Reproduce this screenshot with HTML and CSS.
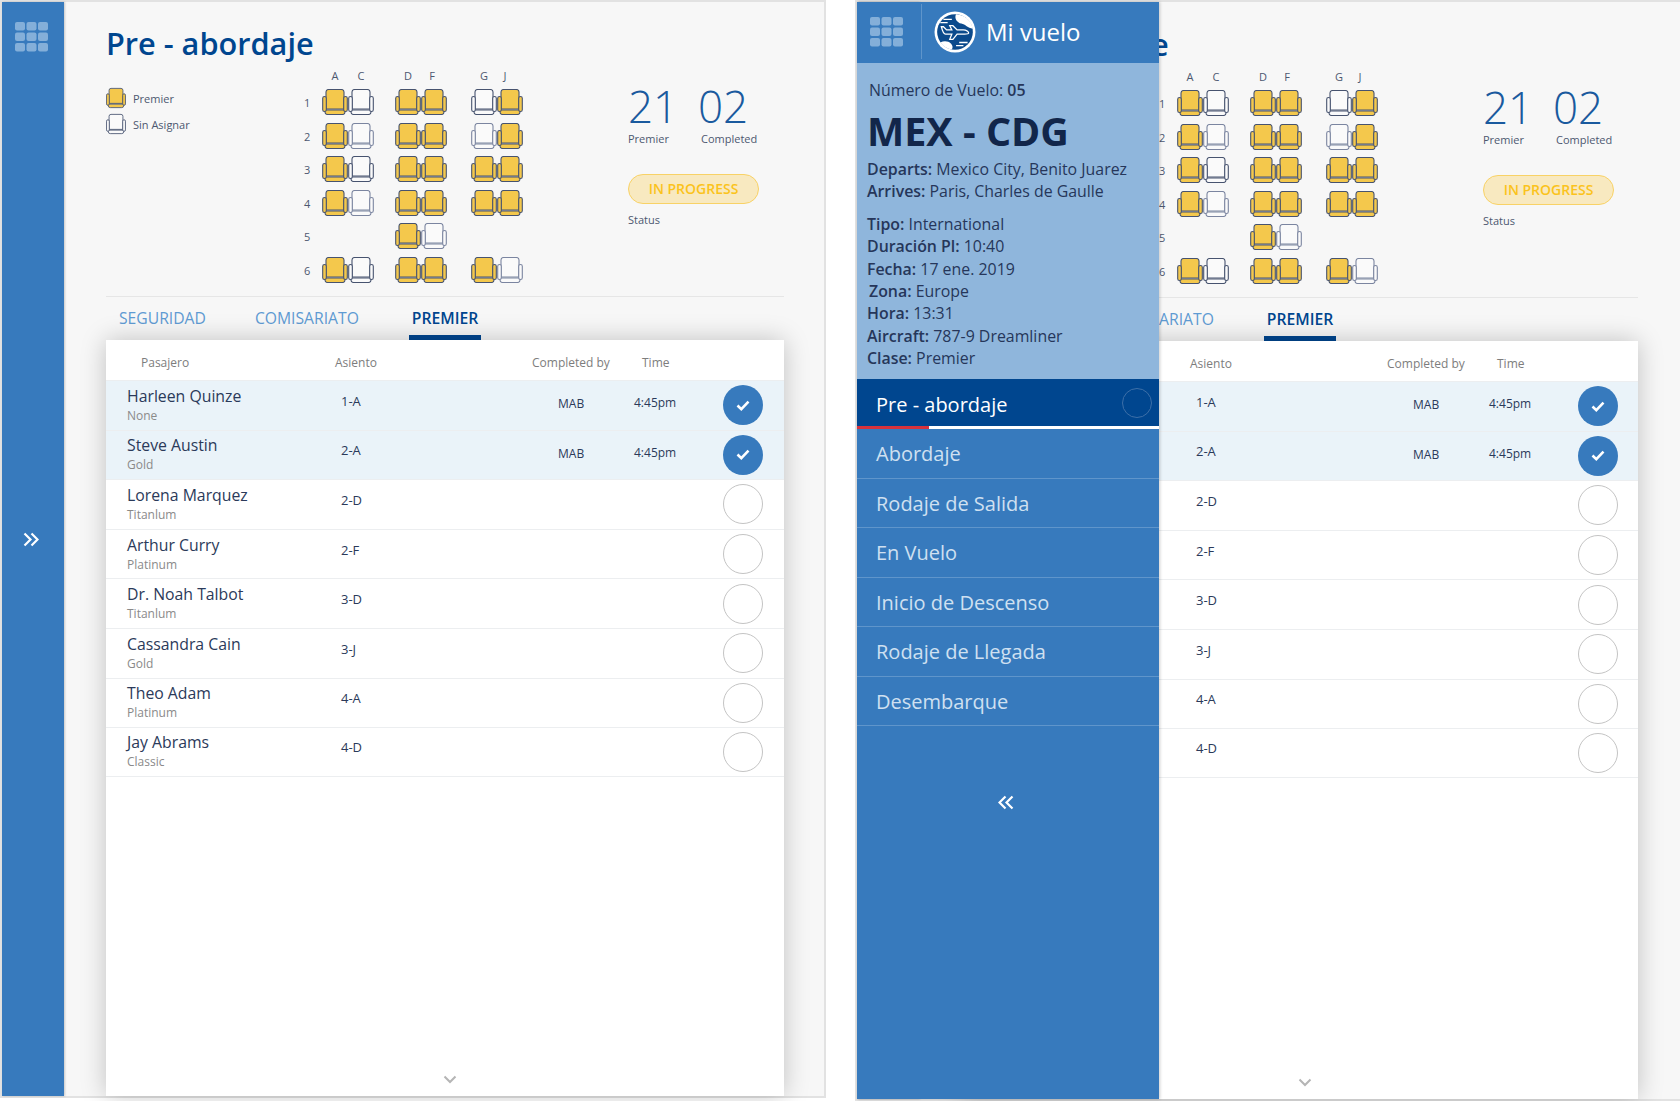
FILE: index.html
```html
<!DOCTYPE html>
<html lang="es">
<head>
  <meta charset="UTF-8">
  <title>Pre - abordaje</title>
  <link rel="stylesheet" href="styles.css">
</head>
<body>
  <!-- iconos compartidos -->
  <svg class="defs" width="0" height="0">
    <symbol id="seat" viewBox="0 0 26 26">
      <path d="M4 20V3a2.500 2.500 0 0 1 2.500-2.500h13A2.500 2.500 0 0 1 22 3v17z"/>
      <path d="M3 21h20v2a2.500 2.500 0 0 1-2.500 2.500h-15A2.500 2.500 0 0 1 3 23z"/>
      <rect x="0.700" y="7.500" width="3.600" height="15" rx="1.800"/>
      <rect x="21.700" y="7.500" width="3.600" height="15" rx="1.800"/>
    </symbol>
    <symbol id="grid" viewBox="0 0 33 30">
      <rect x="0" y="0" width="10" height="8.500" rx="2"/><rect x="11.500" y="0" width="10" height="8.500" rx="2"/><rect x="23" y="0" width="10" height="8.500" rx="2"/>
      <rect x="0" y="10.500" width="10" height="8.500" rx="2"/><rect x="11.500" y="10.500" width="10" height="8.500" rx="2"/><rect x="23" y="10.500" width="10" height="8.500" rx="2"/>
      <rect x="0" y="21" width="10" height="8.500" rx="2"/><rect x="11.500" y="21" width="10" height="8.500" rx="2"/><rect x="23" y="21" width="10" height="8.500" rx="2"/>
    </symbol>
    <symbol id="check" viewBox="0 0 14 11">
      <path d="M1.500 5.500l3.800 3.600 7.200-7.400" fill="none" stroke="#fff" stroke-width="2.600"/>
    </symbol>
    <symbol id="chevrons" viewBox="0 0 16 15">
      <path d="M1.500 1.500l6 6-6 6M8.500 1.500l6 6-6 6" fill="none" stroke="#fff" stroke-width="2.200"/>
    </symbol>
  </svg>

  <!-- pantalla 1 : menu cerrado -->
  <section class="screen">
    <aside class="rail">
      <svg class="grid-icon"><use href="#grid"/></svg>
      <svg class="rail-arrow"><use href="#chevrons"/></svg>
    </aside>
    <div class="main">
      <h1 class="title">Pre - abordaje</h1>
      <div class="summary">
        <div class="legend">
          <div class="legend-item"><svg class="seat on"><use href="#seat"/></svg>Premier</div>
          <div class="legend-item"><svg class="seat"><use href="#seat"/></svg>Sin Asignar</div>
        </div>
        <div class="seatmap">
          <span></span><b>A</b><b>C</b><span></span><b>D</b><b class="col-f">F</b><span></span><b>G</b><b class="col-j">J</b>
          <i>1</i><svg class="seat on"><use href="#seat"/></svg><svg class="seat"><use href="#seat"/></svg><span></span><svg class="seat on"><use href="#seat"/></svg><svg class="seat on"><use href="#seat"/></svg><span></span><svg class="seat"><use href="#seat"/></svg><svg class="seat on"><use href="#seat"/></svg>
          <i>2</i><svg class="seat on"><use href="#seat"/></svg><svg class="seat soft"><use href="#seat"/></svg><span></span><svg class="seat on"><use href="#seat"/></svg><svg class="seat on"><use href="#seat"/></svg><span></span><svg class="seat soft"><use href="#seat"/></svg><svg class="seat on"><use href="#seat"/></svg>
          <i>3</i><svg class="seat on"><use href="#seat"/></svg><svg class="seat"><use href="#seat"/></svg><span></span><svg class="seat on"><use href="#seat"/></svg><svg class="seat on"><use href="#seat"/></svg><span></span><svg class="seat on"><use href="#seat"/></svg><svg class="seat on"><use href="#seat"/></svg>
          <i>4</i><svg class="seat on"><use href="#seat"/></svg><svg class="seat soft"><use href="#seat"/></svg><span></span><svg class="seat on"><use href="#seat"/></svg><svg class="seat on"><use href="#seat"/></svg><span></span><svg class="seat on"><use href="#seat"/></svg><svg class="seat on"><use href="#seat"/></svg>
          <i>5</i><span></span><span></span><span></span><svg class="seat on"><use href="#seat"/></svg><svg class="seat soft"><use href="#seat"/></svg><span></span><span></span><span></span>
          <i>6</i><svg class="seat on"><use href="#seat"/></svg><svg class="seat"><use href="#seat"/></svg><span></span><svg class="seat on"><use href="#seat"/></svg><svg class="seat on"><use href="#seat"/></svg><span></span><svg class="seat on"><use href="#seat"/></svg><svg class="seat soft"><use href="#seat"/></svg>
        </div>
        <div class="stats">
          <div class="counts">
            <div class="count"><strong>21</strong><span>Premier</span></div>
            <div class="count"><strong>02</strong><span>Completed</span></div>
          </div>
          <div class="pill">IN PROGRESS</div>
          <div class="status-label">Status</div>
        </div>
      </div>
      <nav class="tabs">
        <a class="tab tab-seguridad">SEGURIDAD</a>
        <a class="tab tab-comisariato">COMISARIATO</a>
        <a class="tab active">PREMIER</a>
      </nav>
      <div class="card">
        <div class="list-head"><span>Pasajero</span><span>Asiento</span><span>Completed by</span><span>Time</span></div>
        <div class="row done"><div class="who"><div class="name">Harleen Quinze</div><div class="tier">None</div></div><div class="place">1-A</div><div class="by">MAB</div><div class="time">4:45pm</div><div class="tick"><svg><use href="#check"/></svg></div></div>
        <div class="row done"><div class="who"><div class="name">Steve Austin</div><div class="tier">Gold</div></div><div class="place">2-A</div><div class="by">MAB</div><div class="time">4:45pm</div><div class="tick"><svg><use href="#check"/></svg></div></div>
        <div class="row"><div class="who"><div class="name">Lorena Marquez</div><div class="tier">Titanlum</div></div><div class="place">2-D</div><div class="by"></div><div class="time"></div><div class="tick"></div></div>
        <div class="row"><div class="who"><div class="name">Arthur Curry</div><div class="tier">Platinum</div></div><div class="place">2-F</div><div class="by"></div><div class="time"></div><div class="tick"></div></div>
        <div class="row"><div class="who"><div class="name">Dr. Noah Talbot</div><div class="tier">Titanlum</div></div><div class="place">3-D</div><div class="by"></div><div class="time"></div><div class="tick"></div></div>
        <div class="row"><div class="who"><div class="name">Cassandra Cain</div><div class="tier">Gold</div></div><div class="place">3-J</div><div class="by"></div><div class="time"></div><div class="tick"></div></div>
        <div class="row"><div class="who"><div class="name">Theo Adam</div><div class="tier">Platinum</div></div><div class="place">4-A</div><div class="by"></div><div class="time"></div><div class="tick"></div></div>
        <div class="row"><div class="who"><div class="name">Jay Abrams</div><div class="tier">Classic</div></div><div class="place">4-D</div><div class="by"></div><div class="time"></div><div class="tick"></div></div>
        <svg class="more" viewBox="0 0 14 9"><path d="M1.500 1.500L7 7l5.500-5.500" fill="none" stroke="#b5b5b5" stroke-width="2"/></svg>
      </div>
    </div>
  </section>

  <!-- pantalla 2 : menu abierto -->
  <section class="screen screen-open">
    <aside class="rail"></aside>
    <div class="main">
      <h1 class="title">Pre - abordaje</h1>
      <div class="summary">
        <div class="legend"></div>
        <div class="seatmap">
          <span></span><b>A</b><b>C</b><span></span><b>D</b><b class="col-f">F</b><span></span><b>G</b><b class="col-j">J</b>
          <i>1</i><svg class="seat on"><use href="#seat"/></svg><svg class="seat"><use href="#seat"/></svg><span></span><svg class="seat on"><use href="#seat"/></svg><svg class="seat on"><use href="#seat"/></svg><span></span><svg class="seat"><use href="#seat"/></svg><svg class="seat on"><use href="#seat"/></svg>
          <i>2</i><svg class="seat on"><use href="#seat"/></svg><svg class="seat soft"><use href="#seat"/></svg><span></span><svg class="seat on"><use href="#seat"/></svg><svg class="seat on"><use href="#seat"/></svg><span></span><svg class="seat soft"><use href="#seat"/></svg><svg class="seat on"><use href="#seat"/></svg>
          <i>3</i><svg class="seat on"><use href="#seat"/></svg><svg class="seat"><use href="#seat"/></svg><span></span><svg class="seat on"><use href="#seat"/></svg><svg class="seat on"><use href="#seat"/></svg><span></span><svg class="seat on"><use href="#seat"/></svg><svg class="seat on"><use href="#seat"/></svg>
          <i>4</i><svg class="seat on"><use href="#seat"/></svg><svg class="seat soft"><use href="#seat"/></svg><span></span><svg class="seat on"><use href="#seat"/></svg><svg class="seat on"><use href="#seat"/></svg><span></span><svg class="seat on"><use href="#seat"/></svg><svg class="seat on"><use href="#seat"/></svg>
          <i>5</i><span></span><span></span><span></span><svg class="seat on"><use href="#seat"/></svg><svg class="seat soft"><use href="#seat"/></svg><span></span><span></span><span></span>
          <i>6</i><svg class="seat on"><use href="#seat"/></svg><svg class="seat"><use href="#seat"/></svg><span></span><svg class="seat on"><use href="#seat"/></svg><svg class="seat on"><use href="#seat"/></svg><span></span><svg class="seat on"><use href="#seat"/></svg><svg class="seat soft"><use href="#seat"/></svg>
        </div>
        <div class="stats">
          <div class="counts">
            <div class="count"><strong>21</strong><span>Premier</span></div>
            <div class="count"><strong>02</strong><span>Completed</span></div>
          </div>
          <div class="pill">IN PROGRESS</div>
          <div class="status-label">Status</div>
        </div>
      </div>
      <nav class="tabs">
        <a class="tab tab-seguridad">SEGURIDAD</a>
        <a class="tab tab-comisariato">COMISARIATO</a>
        <a class="tab active">PREMIER</a>
      </nav>
      <div class="card">
        <div class="list-head"><span>Pasajero</span><span>Asiento</span><span>Completed by</span><span>Time</span></div>
        <div class="row done"><div class="who"></div><div class="place">1-A</div><div class="by">MAB</div><div class="time">4:45pm</div><div class="tick"><svg><use href="#check"/></svg></div></div>
        <div class="row done"><div class="who"></div><div class="place">2-A</div><div class="by">MAB</div><div class="time">4:45pm</div><div class="tick"><svg><use href="#check"/></svg></div></div>
        <div class="row"><div class="who"></div><div class="place">2-D</div><div class="by"></div><div class="time"></div><div class="tick"></div></div>
        <div class="row"><div class="who"></div><div class="place">2-F</div><div class="by"></div><div class="time"></div><div class="tick"></div></div>
        <div class="row"><div class="who"></div><div class="place">3-D</div><div class="by"></div><div class="time"></div><div class="tick"></div></div>
        <div class="row"><div class="who"></div><div class="place">3-J</div><div class="by"></div><div class="time"></div><div class="tick"></div></div>
        <div class="row"><div class="who"></div><div class="place">4-A</div><div class="by"></div><div class="time"></div><div class="tick"></div></div>
        <div class="row"><div class="who"></div><div class="place">4-D</div><div class="by"></div><div class="time"></div><div class="tick"></div></div>
        <svg class="more" viewBox="0 0 14 9"><path d="M1.500 1.500L7 7l5.500-5.500" fill="none" stroke="#b5b5b5" stroke-width="2"/></svg>
      </div>
    </div>

    <!-- menu lateral por encima del contenido -->
    <aside class="drawer">
      <header class="drawer-head">
        <div class="drawer-grid"><svg class="grid-icon"><use href="#grid"/></svg></div>
        <svg class="logo" viewBox="0 0 40 40">
          <circle cx="20" cy="20" r="19.500" fill="#fff"/>
          <circle cx="20" cy="20" r="17" fill="#0b4a8c"/>
          <path d="M21 3a17 17 0 0 1 16 14c-5-1-7-4-11-5s-7-5-5-9z" fill="#fff"/>
          <path d="M6 30c4-2 8-1 10 1s2 4 1 5.700A17 17 0 0 1 6 30z" fill="#fff"/>
          <path d="M7 15h2l3 3h5l-2-4h3l4 4h6c3 0 5 2 5 3s-2 1-4 1h-7l-4 5h-3l2-5h-6c-2 0-3-3-4-7z" fill="#0b4a8c" stroke="#fff" stroke-width="1.200"/>
          <path d="M9 8h8M6 11h7M24 30h8M21 33h7" stroke="#fff" stroke-width="1.200"/>
        </svg>
        <span class="drawer-title">Mi vuelo</span>
      </header>
      <div class="flight">
        <div class="flight-no">Número de Vuelo: <b>05</b></div>
        <div class="route">MEX - CDG</div>
        <div class="line"><b>Departs:</b> Mexico City, Benito Juarez</div>
        <div class="line"><b>Arrives:</b> Paris, Charles de Gaulle</div>
        <div class="details">
          <div class="line"><b>Tipo:</b> International</div>
          <div class="line"><b>Duración Pl:</b> 10:40</div>
          <div class="line"><b>Fecha:</b> 17 ene. 2019</div>
          <div class="line zona"><b>Zona:</b> Europe</div>
          <div class="line"><b>Hora:</b> 13:31</div>
          <div class="line"><b>Aircraft:</b> 787-9 Dreamliner</div>
          <div class="line"><b>Clase:</b> Premier</div>
        </div>
      </div>
      <ul class="steps">
        <li class="step current">Pre - abordaje<span class="step-dot"></span></li>
        <li class="step">Abordaje</li>
        <li class="step">Rodaje de Salida</li>
        <li class="step">En Vuelo</li>
        <li class="step">Inicio de Descenso</li>
        <li class="step">Rodaje de Llegada</li>
        <li class="step">Desembarque</li>
      </ul>
      <svg class="drawer-arrow"><use href="#chevrons"/></svg>
    </aside>
  </section>
</body>
</html>
```

FILE: styles.css
```css
* {
  box-sizing: border-box;
}

html, body {
  margin: 0;
  height: 1101px;
  overflow: hidden;
}

body {
  display: flex;
  align-items: flex-start;
  gap: 29px;
  background-color: #fff;
  color: #2b3a5a;
  font-family: "Open Sans", "Liberation Sans", sans-serif;
}

.defs {
  position: absolute;
}

/* pantallas */
.screen {
  position: relative;
  display: flex;
  flex: none;
  width: 826px;
  height: 1098px;
  border: 2px solid #e2e2e2;
  background-color: #f7f7f7;
}

.screen-open {
  width: 825px;
  height: 1101px;
  border-right: none;
}

.screen-open .main {
  padding: 20px 42px 0 42px;
}

.rail {
  display: flex;
  flex: none;
  flex-direction: column;
  align-items: center;
  width: 62px;
  padding: 20px 4px 0 0;
  background-color: #377abd;
  box-shadow: 1px 0 2px rgba(0, 0, 0, 0.2);
}

.grid-icon {
  width: 33px;
  height: 30px;
  fill: #84afd9;
}

.rail-arrow {
  width: 16px;
  height: 15px;
  margin-top: 480px;
}

.main {
  display: flex;
  flex: 1;
  flex-direction: column;
  min-width: 0;
  padding: 19px 40px 0 42px;
}

.title {
  margin: 0;
  font-size: 30.700px;
  font-weight: 600;
  line-height: 44px;
  color: #00468f;
}

/* resumen */
.summary {
  display: flex;
  height: 228px;
  margin-top: 4px;
  border-bottom: 1px solid #e6e6e6;
}

.legend {
  flex: none;
  width: 192px;
  padding-top: 16px;
}

.legend-item {
  display: flex;
  align-items: center;
  gap: 7px;
  height: 26px;
  font-size: 11px;
  color: #4d5870;
}

.legend-item .seat {
  width: 20px;
  height: 22px;
}

.seat {
  width: 26px;
  height: 26px;
  fill: #fafafa;
  stroke: #47536f;
  stroke-width: 1.100;
}

.seat.on {
  fill: #f4c84c;
}

.seat.soft {
  stroke: #7b85a0;
}

.seatmap {
  display: grid;
  flex: none;
  grid-template-columns: 24px 26px 26px 21px 26px 26px 24px 26px 26px;
  grid-template-rows: 20px repeat(6, 33.500px);
  align-items: start;
  font-size: 11px;
  color: #4d5870;
}

.seatmap b {
  margin-top: -1px;
  font-weight: 400;
  text-align: center;
}

.seatmap .col-f {
  padding-right: 4px;
}

.seatmap .col-j {
  padding-right: 10px;
}

.seatmap i {
  padding: 6px 0 0 6px;
  font-style: normal;
}

.stats {
  margin-left: 105px;
  padding-top: 12px;
}

.counts {
  display: flex;
}

.count {
  display: flex;
  flex-direction: column;
  width: 70px;
}

.count strong {
  font-size: 44px;
  font-weight: 300;
  line-height: 50px;
  color: #1a5a9e;
}

.count span {
  margin-top: 1px;
  font-size: 11px;
  line-height: 14px;
  color: #4d5870;
}

.count + .count span {
  margin-left: 3px;
}

.pill {
  width: 131px;
  height: 30px;
  margin-top: 28px;
  border: 1px solid #f8d266;
  border-radius: 15px;
  background-color: #f8e9c0;
  color: #fbc31c;
  font-size: 14px;
  font-weight: 600;
  line-height: 28px;
  text-align: center;
}

.status-label {
  margin-top: 9px;
  font-size: 11px;
  line-height: 14px;
  color: #4d5870;
}

/* onglets */
.tabs {
  display: flex;
  height: 43px;
  font-size: 15.700px;
  line-height: 43px;
}

.tab {
  color: #5f9bd3;
}

.tab-seguridad {
  margin-left: 13px;
}

.tab-comisariato {
  margin-left: 49px;
}

.tab.active {
  margin-left: 50px;
  padding: 0 3px;
  border-bottom: 5px solid #00468f;
  color: #00468f;
  font-weight: 600;
}

/* liste */
.card {
  position: relative;
  flex: 1;
  background-color: #fff;
  box-shadow: 0 0 24px rgba(0, 0, 0, 0.22);
}

.list-head {
  display: grid;
  grid-template-columns: 194px 197px 110px auto;
  height: 40px;
  padding-left: 35px;
  font-size: 12px;
  line-height: 46px;
  color: #7d7d7d;
}

.row {
  display: grid;
  grid-template-columns: 214px 217px 76px 89px 40px;
  align-items: center;
  height: 49.600px;
  padding-left: 21px;
  border-top: 1px solid #eceef0;
  font-size: 12px;
}

.row:nth-of-type(9) {
  border-bottom: 1px solid #eceef0;
}

.row.done {
  background-color: #eaf3f9;
}

.who {
  margin-top: -1px;
}

.name {
  font-size: 15.800px;
  line-height: 22px;
}

.tier {
  font-size: 12px;
  line-height: 18px;
  color: #8a8a8a;
}

.place {
  margin-bottom: 9px;
  font-size: 13px;
}

.by {
  margin-bottom: 3px;
}

.time {
  margin-bottom: 5px;
}

.tick {
  width: 40px;
  height: 40px;
  border: 1px solid #c4c4c4;
  border-radius: 50%;
  background-color: #fff;
}

.row.done .tick {
  display: flex;
  align-items: center;
  justify-content: center;
  border: none;
  background-color: #377abd;
}

.tick svg {
  width: 14px;
  height: 11px;
}

.more {
  position: absolute;
  left: 337px;
  bottom: 12px;
  width: 14px;
  height: 9px;
}

/* menu lateral */
.drawer {
  position: absolute;
  top: 0;
  left: 0;
  bottom: 0;
  width: 302px;
  background-color: #377abd;
  box-shadow: 1px 0 3px rgba(0, 0, 0, 0.2);
}

.drawer-head {
  display: flex;
  align-items: center;
  height: 61px;
  padding-bottom: 2px;
}

.drawer-grid {
  display: flex;
  align-items: center;
  justify-content: center;
  width: 65px;
  height: 55px;
  padding-right: 6px;
  border-right: 1px solid #5f95cb;
}

.logo {
  width: 42px;
  height: 42px;
  margin-left: 12px;
}

.drawer-title {
  margin-left: 10px;
  font-size: 24px;
  color: #fff;
}

.flight {
  height: 316px;
  padding: 15px 12px 0;
  background-color: #8fb6dc;
  font-size: 15.900px;
  line-height: 22.400px;
  color: #26365a;
}

.flight-no {
  line-height: 24px;
}

.flight b {
  font-weight: 600;
}

.route {
  margin: 4px 0 2px -2px;
  font-size: 39.500px;
  font-weight: 700;
  line-height: 50px;
  color: #12264a;
}

.line {
  margin-left: -2px;
}

.details {
  margin-top: 10px;
}

.zona {
  margin-left: 0;
}

.steps {
  margin: 0;
  padding: 0;
  list-style: none;
}

.step {
  position: relative;
  height: 49.500px;
  padding-left: 19px;
  border-bottom: 1px solid #5f95cb;
  color: #cfe0f1;
  font-size: 20px;
  line-height: 49px;
}

.step.current {
  height: 50px;
  border-bottom: 3px solid #fff;
  background-color: #00468f;
  color: #fff;
  line-height: 51px;
}

.step.current::after {
  content: "";
  position: absolute;
  left: 0;
  bottom: -3px;
  width: 72px;
  height: 3px;
  background-color: #d6323c;
}

.step-dot {
  position: absolute;
  top: 9px;
  right: 7px;
  width: 30px;
  height: 30px;
  border: 1px solid #3d6fa8;
  border-radius: 50%;
}

.drawer-arrow {
  display: block;
  width: 16px;
  height: 15px;
  margin: 69px 0 0 141px;
  transform: scaleX(-1);
}
```
